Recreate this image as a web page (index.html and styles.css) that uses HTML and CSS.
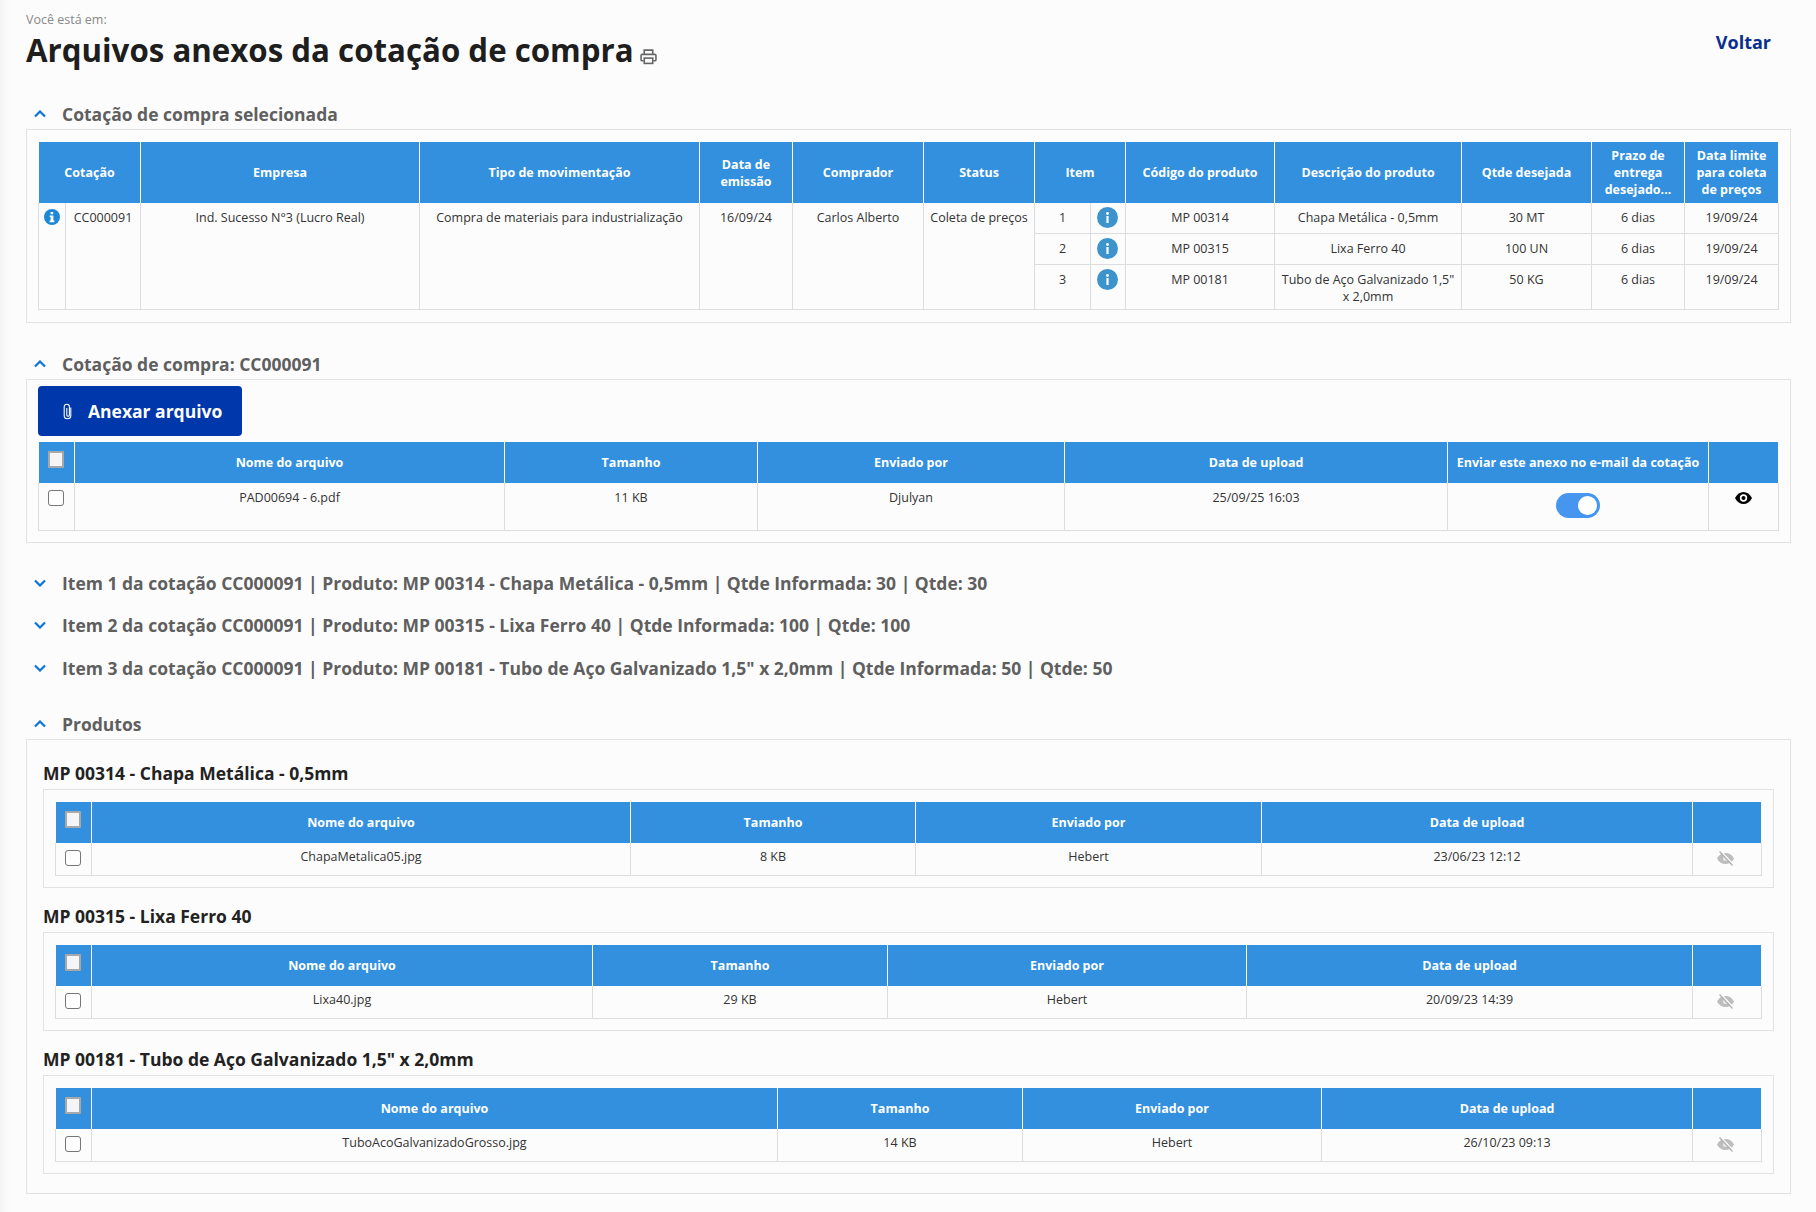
FILE: index.html
```html
<!DOCTYPE html>
<html lang="pt-BR">
<head>
<meta charset="utf-8">
<title>Arquivos anexos da cotação de compra</title>
<link rel="stylesheet" href="styles.css">
</head>
<body>
<main class="page">
  <header class="top">
    <div>
      <p class="crumb">Você está em:</p>
      <h1 class="title">Arquivos anexos da cotação de compra
        <svg class="print" viewBox="0 0 16 16"><path d="M4 6V2h8v4M3.5 12H2a1 1 0 0 1-1-1V7a1 1 0 0 1 1-1h12a1 1 0 0 1 1 1v4a1 1 0 0 1-1 1h-1.5"/><rect x="4" y="9.5" width="8" height="5"/></svg>
      </h1>
    </div>
    <a class="back" href="#">Voltar</a>
  </header>

  <section class="section">
    <h2 class="head"><svg class="chev" viewBox="0 0 12 8"><path d="M1 6.5l5-5 5 5"/></svg>Cotação de compra selecionada</h2>
    <div class="panel panel-quote">
      <table class="grid t-quote">
        <colgroup><col><col><col><col><col><col><col><col><col><col><col><col><col><col></colgroup>
        <thead>
          <tr>
            <th colspan="2">Cotação</th><th>Empresa</th><th>Tipo de movimentação</th><th>Data de emissão</th><th>Comprador</th><th>Status</th><th colspan="2">Item</th><th>Código do produto</th><th>Descrição do produto</th><th>Qtde desejada</th><th>Prazo de entrega desejado...</th><th>Data limite para coleta de preços</th>
          </tr>
        </thead>
        <tbody>
          <tr class="r1">
            <td rowspan="3" class="flush"><svg class="info-solid" viewBox="0 0 16 16"><circle cx="8" cy="8" r="8"/><path class="glyph" d="M6.600 2.900h2.600v2.300H6.600zM5.600 6.400h3.800v5.200h1v1.600H5.600v-1.600h1V8H5.600z"/></svg></td>
            <td rowspan="3">CC000091</td>
            <td rowspan="3">Ind. Sucesso N°3 (Lucro Real)</td>
            <td rowspan="3">Compra de materiais para industrialização</td>
            <td rowspan="3">16/09/24</td>
            <td rowspan="3">Carlos Alberto</td>
            <td rowspan="3" class="tight">Coleta de preços</td>
            <td>1</td><td class="flush"><svg class="info" viewBox="0 0 21 21"><circle cx="10.500" cy="10.500" r="10.500"/><circle class="glyph" cx="10.500" cy="6.500" r="1.400"/><rect class="glyph" x="9.400" y="9" width="2.200" height="7"/></svg></td>
            <td>MP 00314</td><td>Chapa Metálica - 0,5mm</td><td>30 MT</td><td>6 dias</td><td>19/09/24</td>
          </tr>
          <tr class="r2">
            <td>2</td><td class="flush"><svg class="info" viewBox="0 0 21 21"><circle cx="10.500" cy="10.500" r="10.500"/><circle class="glyph" cx="10.500" cy="6.500" r="1.400"/><rect class="glyph" x="9.400" y="9" width="2.200" height="7"/></svg></td>
            <td>MP 00315</td><td>Lixa Ferro 40</td><td>100 UN</td><td>6 dias</td><td>19/09/24</td>
          </tr>
          <tr class="r3">
            <td>3</td><td class="flush"><svg class="info" viewBox="0 0 21 21"><circle cx="10.500" cy="10.500" r="10.500"/><circle class="glyph" cx="10.500" cy="6.500" r="1.400"/><rect class="glyph" x="9.400" y="9" width="2.200" height="7"/></svg></td>
            <td>MP 00181</td><td>Tubo de Aço Galvanizado 1,5" x 2,0mm</td><td>50 KG</td><td>6 dias</td><td>19/09/24</td>
          </tr>
        </tbody>
      </table>
    </div>
  </section>

  <section class="section">
    <h2 class="head"><svg class="chev" viewBox="0 0 12 8"><path d="M1 6.5l5-5 5 5"/></svg>Cotação de compra: CC000091</h2>
    <div class="panel panel-files">
      <button class="attach" type="button"><svg class="clip" viewBox="0 0 9 17"><path d="M7.800 4.500v8a3.300 3.300 0 0 1-6.600 0V3.800a2.600 2.600 0 0 1 5.200 0v8.200a1.300 1.300 0 0 1-2.600 0V5"/></svg>Anexar arquivo</button>
      <table class="grid t-files">
        <colgroup><col><col><col><col><col><col><col></colgroup>
        <thead>
          <tr><th class="chk-h"><input class="check check-head" type="checkbox"></th><th>Nome do arquivo</th><th>Tamanho</th><th>Enviado por</th><th>Data de upload</th><th class="wide">Enviar este anexo no e-mail da cotação</th><th></th></tr>
        </thead>
        <tbody>
          <tr class="tall">
            <td class="chk-c"><input class="check" type="checkbox"></td><td>PAD00694 - 6.pdf</td><td>11 KB</td><td>Djulyan</td><td>25/09/25 16:03</td>
            <td class="flush"><span class="toggle"></span></td>
            <td class="eye-c"><svg class="eye" viewBox="0 0 17 12"><path d="M0 6C2 2 5.200 0 8.500 0S15 2 17 6c-2 4-5.200 6-8.500 6S2 10 0 6z"/><circle class="eye-w" cx="8.500" cy="6" r="3.700"/><circle cx="8.500" cy="6" r="2"/></svg></td>
          </tr>
        </tbody>
      </table>
    </div>
  </section>

  <h2 class="head item-head first"><svg class="chev" viewBox="0 0 12 8"><path d="M1 1.500l5 5 5-5"/></svg>Item 1 da cotação CC000091 | Produto: MP 00314 - Chapa Metálica - 0,5mm | Qtde Informada: 30 | Qtde: 30</h2>
  <h2 class="head item-head"><svg class="chev" viewBox="0 0 12 8"><path d="M1 1.500l5 5 5-5"/></svg>Item 2 da cotação CC000091 | Produto: MP 00315 - Lixa Ferro 40 | Qtde Informada: 100 | Qtde: 100</h2>
  <h2 class="head item-head"><svg class="chev" viewBox="0 0 12 8"><path d="M1 1.500l5 5 5-5"/></svg>Item 3 da cotação CC000091 | Produto: MP 00181 - Tubo de Aço Galvanizado 1,5" x 2,0mm | Qtde Informada: 50 | Qtde: 50</h2>

  <section class="section">
    <h2 class="head"><svg class="chev" viewBox="0 0 12 8"><path d="M1 6.5l5-5 5 5"/></svg>Produtos</h2>
    <div class="panel panel-products">
      <h3 class="prod">MP 00314 - Chapa Metálica - 0,5mm</h3>
      <div class="subpanel">
        <table class="grid t-prod t-p1">
          <colgroup><col><col><col><col><col><col></colgroup>
          <thead><tr><th class="chk-h"><input class="check check-head" type="checkbox"></th><th>Nome do arquivo</th><th>Tamanho</th><th>Enviado por</th><th>Data de upload</th><th></th></tr></thead>
          <tbody><tr class="short"><td class="chk-c"><input class="check" type="checkbox"></td><td>ChapaMetalica05.jpg</td><td>8 KB</td><td>Hebert</td><td>23/06/23 12:12</td><td class="eye-c"><svg class="eye off" viewBox="0 0 17 15"><path d="M0 7.500C2 3.700 5.200 2 8.500 2S15 3.700 17 7.500C15 11.300 11.800 13 8.500 13S2 11.300 0 7.500z"/><circle class="eye-w" cx="8.500" cy="7.500" r="2.600"/><path class="slash-w" d="M4 .2l13 14"/><path class="slash" d="M2.500 .5l13 14"/></svg></td></tr></tbody>
        </table>
      </div>

      <h3 class="prod">MP 00315 - Lixa Ferro 40</h3>
      <div class="subpanel">
        <table class="grid t-prod t-p2">
          <colgroup><col><col><col><col><col><col></colgroup>
          <thead><tr><th class="chk-h"><input class="check check-head" type="checkbox"></th><th>Nome do arquivo</th><th>Tamanho</th><th>Enviado por</th><th>Data de upload</th><th></th></tr></thead>
          <tbody><tr class="short"><td class="chk-c"><input class="check" type="checkbox"></td><td>Lixa40.jpg</td><td>29 KB</td><td>Hebert</td><td>20/09/23 14:39</td><td class="eye-c"><svg class="eye off" viewBox="0 0 17 15"><path d="M0 7.500C2 3.700 5.200 2 8.500 2S15 3.700 17 7.500C15 11.300 11.800 13 8.500 13S2 11.300 0 7.500z"/><circle class="eye-w" cx="8.500" cy="7.500" r="2.600"/><path class="slash-w" d="M4 .2l13 14"/><path class="slash" d="M2.500 .5l13 14"/></svg></td></tr></tbody>
        </table>
      </div>

      <h3 class="prod">MP 00181 - Tubo de Aço Galvanizado 1,5" x 2,0mm</h3>
      <div class="subpanel">
        <table class="grid t-prod t-p3">
          <colgroup><col><col><col><col><col><col></colgroup>
          <thead><tr><th class="chk-h"><input class="check check-head" type="checkbox"></th><th>Nome do arquivo</th><th>Tamanho</th><th>Enviado por</th><th>Data de upload</th><th></th></tr></thead>
          <tbody><tr class="short"><td class="chk-c"><input class="check" type="checkbox"></td><td>TuboAcoGalvanizadoGrosso.jpg</td><td>14 KB</td><td>Hebert</td><td>26/10/23 09:13</td><td class="eye-c"><svg class="eye off" viewBox="0 0 17 15"><path d="M0 7.500C2 3.700 5.200 2 8.500 2S15 3.700 17 7.500C15 11.300 11.800 13 8.500 13S2 11.300 0 7.500z"/><circle class="eye-w" cx="8.500" cy="7.500" r="2.600"/><path class="slash-w" d="M4 .2l13 14"/><path class="slash" d="M2.500 .5l13 14"/></svg></td></tr></tbody>
        </table>
      </div>
    </div>
  </section>
</main>
</body>
</html>
```

FILE: styles.css
```css
* { box-sizing: border-box; }
html, body { margin: 0; height: 100%; }
body {
  background: linear-gradient(90deg, #f4f4f4, #fcfcfc 10px);
  font-family: "Open Sans", "Liberation Sans", sans-serif;
  color: #333;
  font-size: 12px;
}
.page { padding: 13px 25px 0 26px; }

.top { display: flex; justify-content: space-between; align-items: flex-start; height: 89px; }
.crumb { margin: 0; font-size: 12.500px; line-height: 14px; color: #888; }
.title { margin: 4px 0 0; font-size: 31.250px; line-height: 38px; font-weight: 700; color: #1e1e1e; }
.print { width: 17px; height: 17px; vertical-align: -3px; margin-left: -2px; fill: none; stroke: #666; stroke-width: 1.500; }
.back { margin: 17px 20px 0 0; font-size: 18px; line-height: 24px; font-weight: 700; color: #0a2f8f; text-decoration: none; }

.head { display: flex; align-items: center; margin: 0; height: 27px; padding-bottom: 4px; font-size: 17.500px; font-weight: 700; color: #5f5f5f; }
.chev { width: 12px; height: 8px; margin: 0 16px 0 8px; fill: none; stroke: #0b74d6; stroke-width: 2.200; flex: none; }
.section { margin-top: 29px; }
.section:first-of-type { margin-top: 0; }
.item-head { margin-top: 15.500px; }
.item-head.first { margin-top: 28px; }

.panel { border: 1px solid #e2e2e2; }
.panel-quote { padding: 12px 11px; }
.panel-files { padding: 6px 11px 11px; }
.panel-products { padding: 21px 16px 19px; }
.subpanel { border: 1px solid #e2e2e2; padding: 12px 11px 11px; }
.prod { margin: 16px 0 4px; font-size: 17.500px; line-height: 24px; font-weight: 700; color: #222; }
.prod:first-child { margin-top: 0; }

.grid { width: 100%; table-layout: fixed; border-collapse: separate; border-spacing: 0; }
.grid th {
  background: #3290df; background-clip: padding-box; color: #fff; font-size: 12.500px; line-height: 17px; font-weight: 700;
  text-align: center; vertical-align: middle; padding: 0 4px;
  border-right: 1px solid #fff;
}
.grid th:first-child { border-left: 1px solid #fcfcfc; }
.grid th:last-child { border-right: 1px solid #fcfcfc; }
.grid th.wide { padding: 0; }
.grid thead tr { height: 41px; }
.t-quote thead tr { height: 61px; }
.t-quote th:last-child { padding: 0 8px; }
.grid td {
  font-size: 12.500px; line-height: 17px; color: #333; text-align: center; vertical-align: top;
  padding: 5px 4px 0; border-right: 1px solid #ddd; border-bottom: 1px solid #ddd;
}
.grid td:first-child { border-left: 1px solid #ddd; }
.t-quote td { padding-top: 6px; }
.t-files td { padding-top: 6px; }
.t-quote tr:not(.r1) td:first-child { border-left: 0; }
.t-quote td.flush, .t-files td.flush { padding: 0; }
.t-quote td.tight { padding-left: 0; padding-right: 0; }
.r1 { height: 31px; }
.r2 { height: 31px; }
.r3 { height: 45px; }
.tall { height: 48px; }
.short { height: 33px; }

.t-quote col:nth-child(1) { width: 28px; }
.t-quote col:nth-child(2) { width: 75px; }
.t-quote col:nth-child(3) { width: 279px; }
.t-quote col:nth-child(4) { width: 280px; }
.t-quote col:nth-child(5) { width: 93px; }
.t-quote col:nth-child(6) { width: 131px; }
.t-quote col:nth-child(7) { width: 111px; }
.t-quote col:nth-child(8) { width: 56px; }
.t-quote col:nth-child(9) { width: 35px; }
.t-quote col:nth-child(10) { width: 149px; }
.t-quote col:nth-child(11) { width: 187px; }
.t-quote col:nth-child(12) { width: 130px; }
.t-quote col:nth-child(13) { width: 93px; }
.t-quote col:nth-child(14) { width: 94px; }

.t-files col:nth-child(1) { width: 37px; }
.t-files col:nth-child(2) { width: 430px; }
.t-files col:nth-child(3) { width: 253px; }
.t-files col:nth-child(4) { width: 307px; }
.t-files col:nth-child(5) { width: 383px; }
.t-files col:nth-child(6) { width: 261px; }
.t-files col:nth-child(7) { width: 70px; }

.t-prod col:nth-child(1) { width: 37px; }
.t-prod col:nth-child(6) { width: 69px; }
.t-p1 col:nth-child(2) { width: 539px; }
.t-p1 col:nth-child(3) { width: 285px; }
.t-p1 col:nth-child(4) { width: 346px; }
.t-p1 col:nth-child(5) { width: 431px; }
.t-p2 col:nth-child(2) { width: 501px; }
.t-p2 col:nth-child(3) { width: 295px; }
.t-p2 col:nth-child(4) { width: 359px; }
.t-p2 col:nth-child(5) { width: 446px; }
.t-p3 col:nth-child(2) { width: 686px; }
.t-p3 col:nth-child(3) { width: 245px; }
.t-p3 col:nth-child(4) { width: 299px; }
.t-p3 col:nth-child(5) { width: 371px; }

.grid th.chk-h { vertical-align: top; padding: 9px 0 0 9px; }
.grid td.chk-c { padding: 7px 0 0 9px; }
.check {
  appearance: none; display: block; margin: 0; width: 16px; height: 16px;
  background: #fff; border: 1px solid #767676; border-radius: 3px;
}
.check-head { height: 17px; background: #f5f5f5; border: 2px solid #a8a8a8; border-radius: 1px; }

.info-solid { display: block; width: 16px; height: 16px; margin: 6px auto 0 5px; fill: #1b87d6; }
.info-solid .glyph { fill: #fff; }
.info { display: block; width: 21px; height: 21px; margin: 4px 0 0 6px; fill: #3d94cc; }
.info .glyph { fill: #fff; }

.attach {
  display: flex; align-items: center; width: 204px; height: 50px; margin-bottom: 6px; padding: 0 0 0 25px;
  background: #0037ab; color: #fff; border: 0; border-radius: 4px;
  font-family: inherit; font-size: 17.500px; font-weight: 700;
}
.clip { width: 9px; height: 17px; margin-right: 16px; fill: none; stroke: #fff; stroke-width: 1.100; }

.toggle { display: block; position: relative; width: 44px; height: 25px; margin: 10px auto 0; border-radius: 13px; background: #4696f0; }
.toggle::after { content: ""; position: absolute; right: 3px; top: 3px; width: 19px; height: 19px; border-radius: 50%; background: #fff; }

.grid td.eye-c { padding: 9px 0 0; }
.eye { display: block; width: 17px; height: 12px; margin: 0 auto; fill: #000; }
.eye-w { fill: #fff; }
.eye.off { height: 15px; margin: -1px 0 0 24px; fill: #bdbdbd; }
.eye.off .eye-w { fill: #e4e4e4; }
.slash { fill: none; stroke: #b4b4b4; stroke-width: 1.400; }
.slash-w { fill: none; stroke: #fcfcfc; stroke-width: 1.400; }
```
